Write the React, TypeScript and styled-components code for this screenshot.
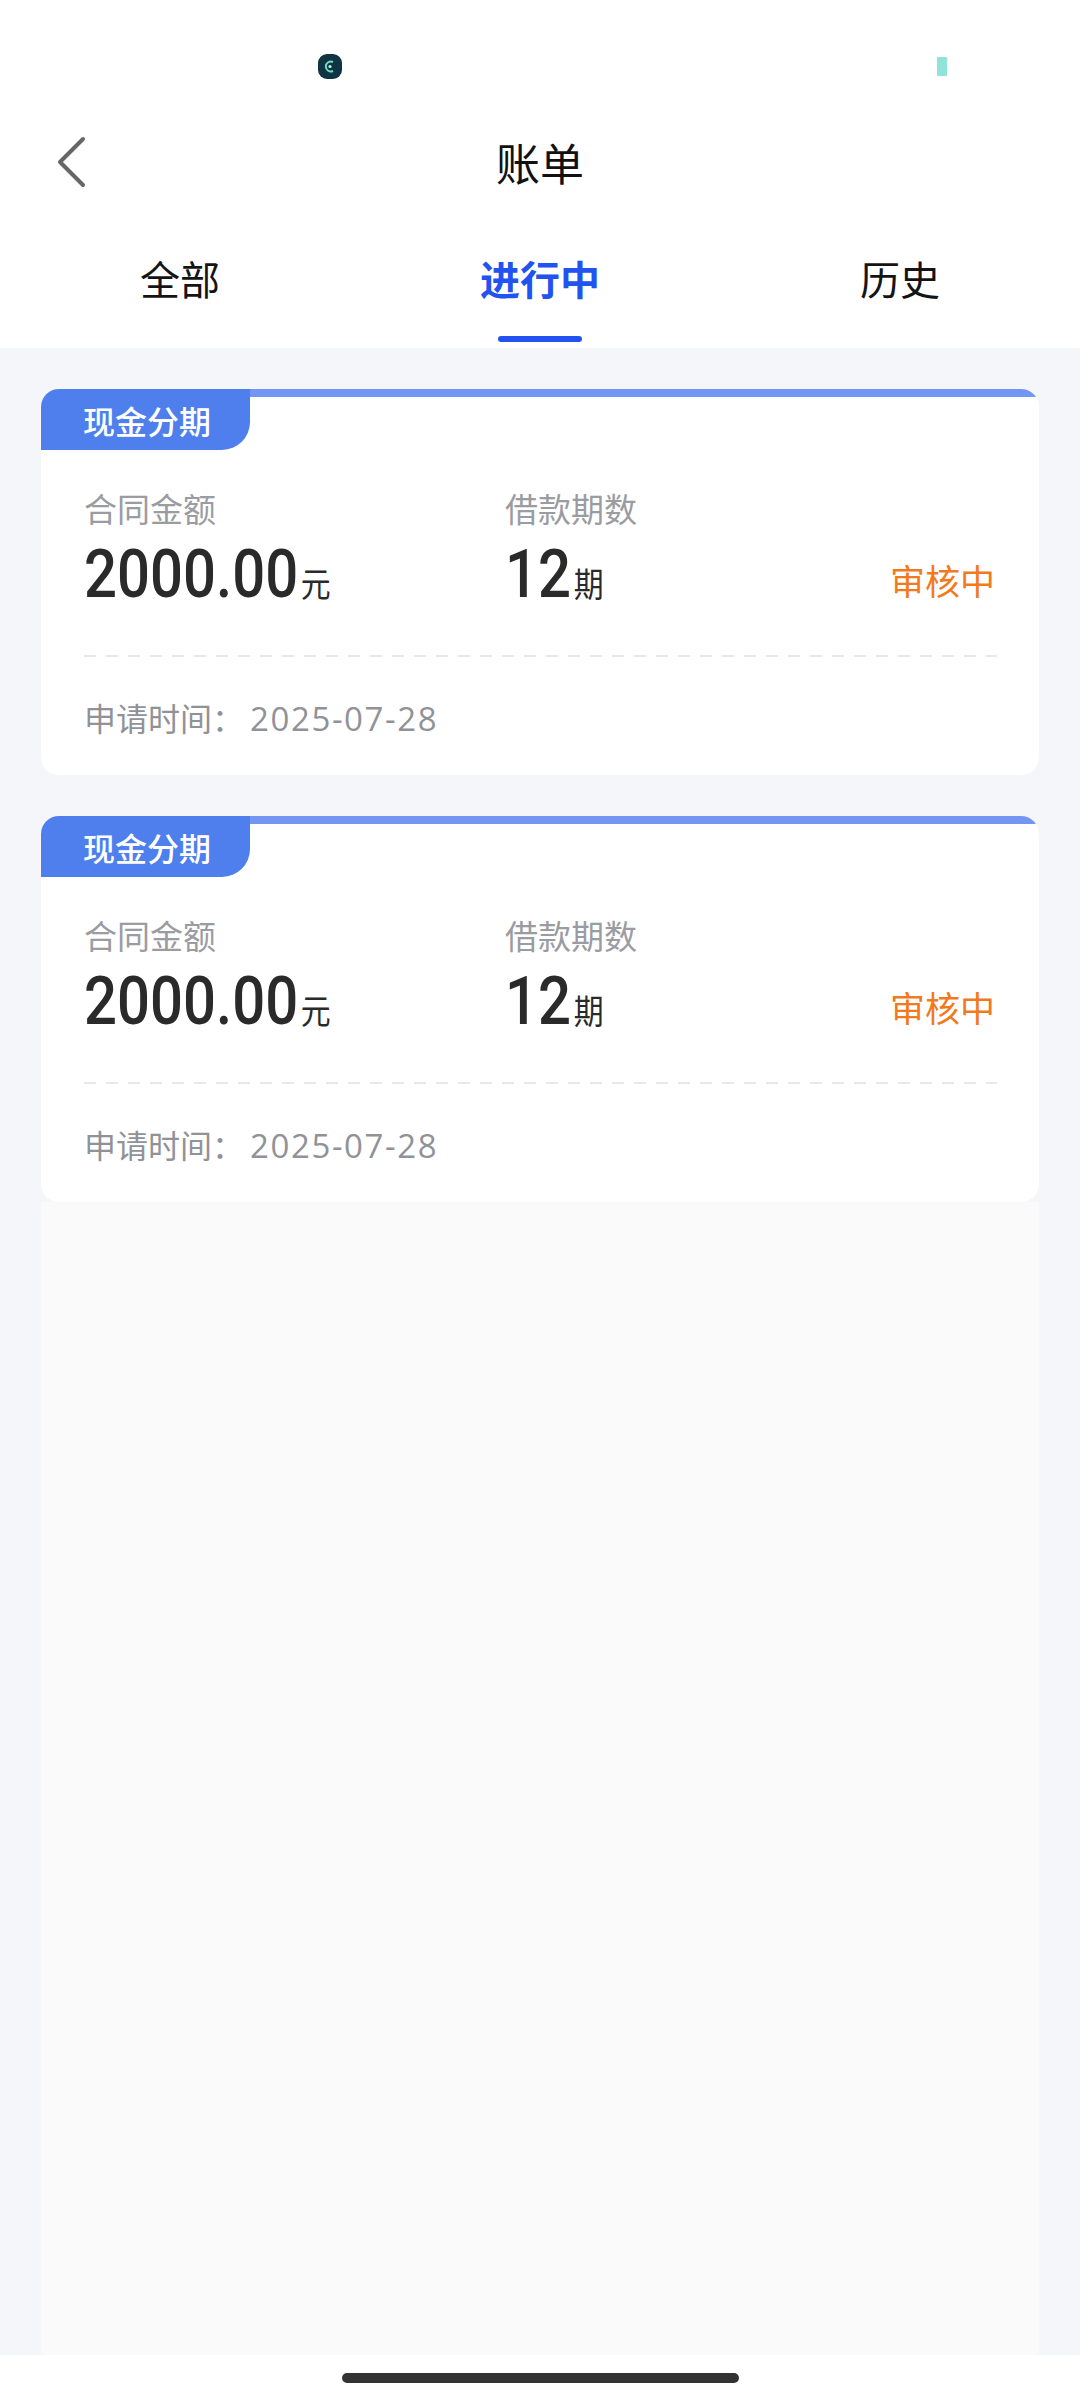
import styled, { createGlobalStyle } from 'styled-components';

interface BillItem {
  id: number;
  type: string;
  amount: string;
  periods: number;
  status: string;
  appliedAt: string;
}

const bills: BillItem[] = [
  { id: 1, type: '现金分期', amount: '2000.00', periods: 12, status: '审核中', appliedAt: '2025-07-28' },
  { id: 2, type: '现金分期', amount: '2000.00', periods: 12, status: '审核中', appliedAt: '2025-07-28' },
];

const tabs = ['全部', '进行中', '历史'];

const GlobalStyle = createGlobalStyle`
  * {
    box-sizing: border-box;
  }

  body {
    margin: 0;
    font-family: 'Noto Sans CJK SC', 'Noto Sans', sans-serif;
    background: #ffffff;
  }
`;

function BillCard({ type, amount, periods, status, appliedAt }: BillItem) {
  return (
    <S.Card>
      <S.CardHeader>
        <S.Tag>{type}</S.Tag>
        <S.TopLine />
      </S.CardHeader>
      <S.InfoRow>
        <S.AmountCol>
          <S.Label>合同金额</S.Label>
          <S.Value>
            {amount}
            <S.Unit>元</S.Unit>
          </S.Value>
        </S.AmountCol>
        <S.PeriodCol>
          <S.Label>借款期数</S.Label>
          <S.Value>
            {periods}
            <S.Unit>期</S.Unit>
          </S.Value>
        </S.PeriodCol>
        <S.Status>{status}</S.Status>
      </S.InfoRow>
      <S.Dashed />
      <S.DateText>
        申请时间：<S.DateValue>{appliedAt}</S.DateValue>
      </S.DateText>
    </S.Card>
  );
}

export default function App() {
  const activeTab = 1;

  return (
    <>
      <GlobalStyle />
      <S.Page>
        <S.Header>
          <S.StatusBar>
            <svg width="24" height="25" viewBox="0 0 24 25">
              <rect x="0" y="0" width="24" height="25" rx="9" fill="#0f3443" />
              <path d="M15 8 A5 5 0 1 0 15 17" stroke="#6fd9c4" strokeWidth="2" fill="none" />
              <circle cx="12" cy="12.5" r="1.6" fill="#bff1e6" />
            </svg>
            <S.Spacer />
            <S.Battery />
          </S.StatusBar>
          <S.NavBar>
            <S.BackButton>
              <svg width="34" height="52" viewBox="0 0 34 52">
                <path
                  d="M28 3 L5 26 L28 49"
                  stroke="#666666"
                  strokeWidth="4"
                  fill="none"
                  strokeLinecap="round"
                  strokeLinejoin="round"
                />
              </svg>
            </S.BackButton>
            <S.Title>账单</S.Title>
            <div />
          </S.NavBar>
          <S.TabBar>
            {tabs.map((tab, index) => (
              <S.Tab key={tab}>
                <S.TabLabel $active={index === activeTab}>{tab}</S.TabLabel>
                <S.Indicator $active={index === activeTab} />
              </S.Tab>
            ))}
          </S.TabBar>
        </S.Header>
        <S.Body>
          <S.List>
            {bills.map((bill) => (
              <BillCard key={bill.id} {...bill} />
            ))}
          </S.List>
          <S.Filler />
        </S.Body>
        <S.HomeBar>
          <S.HomeIndicator />
        </S.HomeBar>
      </S.Page>
    </>
  );
}

const Page = styled.div`
  width: 1080px;
  height: 100vh;
  min-height: 2400px;

  display: flex;
  flex-direction: column;
`;

const Header = styled.header`
  background: #ffffff;
`;

const StatusBar = styled.div`
  height: 118px;

  display: flex;
  align-items: flex-start;

  padding: 54px 133px 0 318px;
`;

const Spacer = styled.div`
  flex: 1;
`;

const Battery = styled.div`
  width: 10px;
  height: 19px;
  margin-top: 3px;

  background: #8fe3d8;
  border-radius: 1px;
`;

const NavBar = styled.div`
  height: 88px;

  display: grid;
  grid-template-columns: 1fr auto 1fr;
  align-items: center;
`;

const BackButton = styled.div`
  display: flex;
  align-items: center;

  padding-left: 55px;
`;

const Title = styled.h1`
  margin: 0;

  font-size: 44px;
  font-weight: 400;
  line-height: 56px;
  color: #111111;
`;

const TabBar = styled.nav`
  height: 142px;

  display: grid;
  grid-template-columns: repeat(3, 1fr);
`;

const Tab = styled.div`
  display: flex;
  flex-direction: column;
  align-items: center;

  padding-top: 44px;
`;

const TabLabel = styled.span<{ $active: boolean }>`
  font-size: 40px;
  line-height: 56px;
  font-weight: ${({ $active }) => ($active ? 700 : 400)};
  color: ${({ $active }) => ($active ? '#2252f0' : '#141414')};
`;

const Indicator = styled.div<{ $active: boolean }>`
  width: 84px;
  height: 6px;
  margin-top: 30px;

  border-radius: 3px;
  background: ${({ $active }) => ($active ? '#2252f0' : 'transparent')};
`;

const Body = styled.main`
  flex: 1;

  display: flex;
  flex-direction: column;

  padding: 41px 41px 0;

  background: #f5f6fa;
`;

const List = styled.div`
  display: flex;
  flex-direction: column;
  gap: 41px;
`;

const Filler = styled.div`
  flex: 1;

  background: #fafafb;
`;

const Card = styled.section`
  display: flex;
  flex-direction: column;

  padding-bottom: 34px;

  background: #ffffff;
  border-radius: 18px;
  overflow: hidden;
`;

const CardHeader = styled.div`
  height: 61px;

  display: flex;
  align-items: flex-start;
`;

const Tag = styled.div`
  width: 209px;
  height: 61px;

  display: flex;
  align-items: center;

  padding-left: 42px;

  font-size: 32px;
  font-weight: 500;
  color: #ffffff;

  background: #4e7fed;
  border-bottom-right-radius: 28px;
`;

const TopLine = styled.div`
  flex: 1;
  height: 8px;

  background: #7395f3;
`;

const InfoRow = styled.div`
  display: flex;
  align-items: flex-end;

  margin-top: 36px;
  padding: 0 44px 0 43px;
`;

const AmountCol = styled.div`
  width: 421px;

  display: flex;
  flex-direction: column;
  gap: 12px;
`;

const PeriodCol = styled(AmountCol)`
  width: auto;
  flex: 1;
`;

const Label = styled.div`
  font-size: 33px;
  line-height: 44px;
  color: #9a9ca2;
`;

/* DIN-like narrow digits: Roboto medium squeezed a bit */
const Value = styled.div`
  height: 66px;

  font-family: 'Roboto', sans-serif;
  font-size: 66px;
  font-weight: 500;
  line-height: 66px;
  color: #2a2a2a;
  white-space: nowrap;

  transform: scaleX(0.88);
  transform-origin: left center;
`;

const Unit = styled.span`
  margin-left: 3px;

  font-family: 'Noto Sans CJK SC', sans-serif;
  font-size: 34px;
  font-weight: 400;
  line-height: 1;
  color: #2a2a2a;
`;

const Status = styled.div`
  margin-bottom: 6px;

  font-size: 35px;
  line-height: 44px;
  color: #f27a1c;
`;

const Dashed = styled.div`
  height: 2px;
  margin: 47px 42px 0 43px;

  background-image: linear-gradient(to right, #e8e8ea 12px, transparent 12px);
  background-size: 22px 2px;
  background-repeat: repeat-x;
`;

const DateText = styled.div`
  margin-top: 38px;
  padding-left: 43px;

  font-size: 32px;
  line-height: 44px;
  color: #909297;
`;

const DateValue = styled.span`
  margin-left: 6px;

  font-family: 'Open Sans', 'Roboto', sans-serif;
  font-size: 33px;
  letter-spacing: 1.6px;
`;

const HomeBar = styled.div`
  height: 45px;

  display: flex;
  justify-content: center;

  padding-top: 18px;

  background: #ffffff;
`;

const HomeIndicator = styled.div`
  width: 397px;
  height: 10px;

  border-radius: 5px;
  background: #333333;
`;

const S = {
  Page,
  Header,
  StatusBar,
  Spacer,
  Battery,
  NavBar,
  BackButton,
  Title,
  TabBar,
  Tab,
  TabLabel,
  Indicator,
  Body,
  List,
  Filler,
  Card,
  CardHeader,
  Tag,
  TopLine,
  InfoRow,
  AmountCol,
  PeriodCol,
  Label,
  Value,
  Unit,
  Status,
  Dashed,
  DateText,
  DateValue,
  HomeBar,
  HomeIndicator,
};
